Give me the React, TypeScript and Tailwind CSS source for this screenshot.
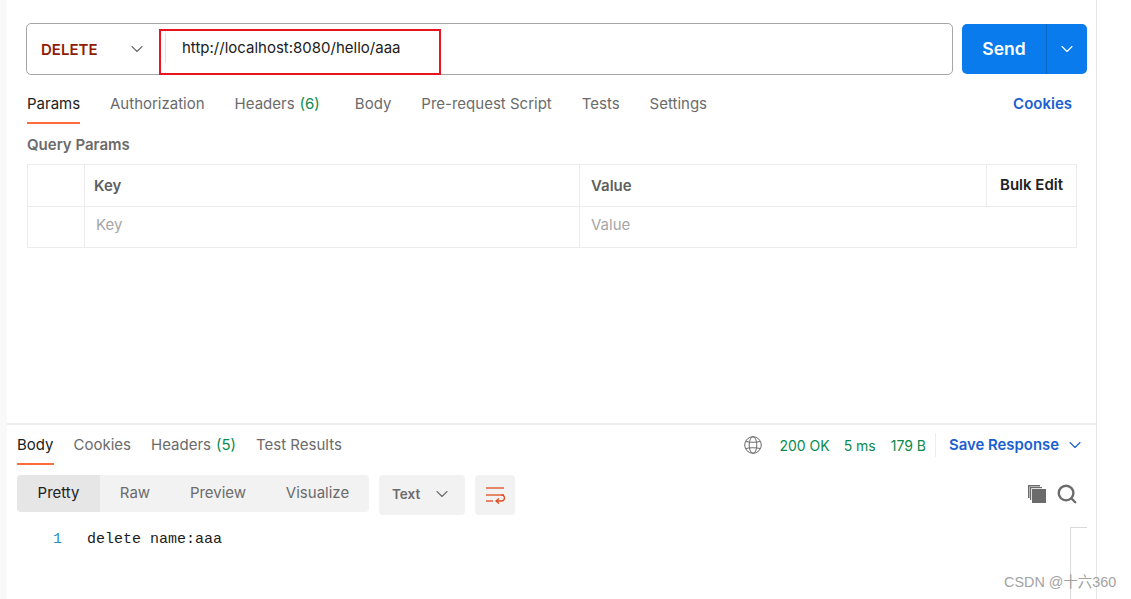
import { ChevronDown, Search } from "lucide-react"

const inter = "font-['Inter',sans-serif]"

function Tab({ label, count, active, className }: { label: string; count?: string; active?: boolean; className: string }) {
    return (
        <div className={`relative h-full flex items-center whitespace-nowrap ${active ? "text-[#212121]" : "text-[#6b6b6b]"} ${className}`}>
            <span>{label}</span>
            {count && <span className="ml-[5px] text-[#0b8a4f]">{count}</span>}
            {active && <div className="absolute left-0 right-0 bottom-0 h-[2px] bg-[#ff6c37]" />}
        </div>
    )
}

function WrapIcon() {
    return (
        <svg width="20" height="18" viewBox="0 0 20 18" fill="none" stroke="#e0491d" strokeWidth="1.3">
            <path d="M1 2h18" />
            <path d="M1 9h18" />
            <path d="M1 15h7" />
            <path d="M11 15h5.500a3 3 0 0 0 0-6" />
            <path d="M14 12.500l-3 2.500 3 2.500" />
        </svg>
    )
}

function CopyIcon() {
    return (
        <svg width="18" height="18" viewBox="0 0 18 18" fill="#6b6b6b">
            <path d="M4 4h14v14H4z" />
            <path d="M0 0h12v1.500H1.500V13H0z" />
            <path d="M2 2h1.200v13H2z" />
            <path d="M2 2h12v1.200H2z" />
        </svg>
    )
}

function GlobeIcon() {
    return (
        <svg width="18" height="18" viewBox="0 0 18 18" fill="none" stroke="#6b6b6b" strokeWidth="1" className="ml-auto">
            <circle cx="9" cy="9" r="8.300" />
            <ellipse cx="9" cy="9" rx="3.800" ry="8.300" />
            <path d="M1.800 5.500c4 1 10.400 1 14.400 0" />
            <path d="M1.800 12.500c4-1 10.400-1 14.400 0" />
        </svg>
    )
}

export default function App() {
    return (
        <div className={`w-[1131px] h-[599px] overflow-hidden bg-white flex text-[15px] ${inter}`}>
            <div className="w-[7px] shrink-0 bg-[#f9f9f9]" />

            <div className="relative w-[1090px] shrink-0 border-r border-[#e6e6e6] flex flex-col">
                {/* url bar */}
                <div className="flex h-[52px] mt-[23px] ml-[19px] mr-[9px]">
                    <div className="relative w-[927px] rounded-[5px] border border-[#a6a6a6] flex">
                        <div className="w-[138px] flex items-center justify-between pl-[14px] pr-[18px]">
                            <span className="font-semibold text-[#8f1a06] pt-[2px]">DELETE</span>
                            <ChevronDown size={20} strokeWidth={1.3} className="text-[#6b6b6b]" />
                        </div>
                        <div className="w-px h-[30px] mt-[9px] bg-[#e0e0e0]" />
                        <div className="pl-[16px] pt-[14px] text-[#212121] leading-5">http://localhost:8080/hello/aaa</div>
                        <div className="absolute left-[132px] top-[5px] w-[282px] h-[46px] border-2 border-[#e8141f]" />
                    </div>
                    <div className="ml-[9px] mt-px h-[50px] w-[125px] rounded-[5px] bg-[#097bed] text-white flex">
                        <div className="w-[85px] border-r border-[#0868c9] flex items-center justify-center font-semibold text-[17.500px]">Send</div>
                        <div className="flex-1 flex items-center justify-center">
                            <ChevronDown size={20} strokeWidth={1.3} />
                        </div>
                    </div>
                </div>

                {/* request tabs */}
                <div className="flex h-[49px] ml-[20px] mr-[24px]">
                    <Tab label="Params" active className="w-[53px] mr-[30px] pt-[9px]" />
                    <Tab label="Authorization" className="mr-[30px] pt-[9px]" />
                    <Tab label="Headers" count="(6)" className="mr-[35px] pt-[9px]" />
                    <Tab label="Body" className="mr-[30px] pt-[9px]" />
                    <Tab label="Pre-request Script" className="mr-[30px] pt-[9px]" />
                    <Tab label="Tests" className="mr-[30px] pt-[9px]" />
                    <Tab label="Settings" className="pt-[9px]" />
                    <div className="ml-auto h-full flex items-center pt-[9px] font-semibold text-[#1a5fd0]">Cookies</div>
                </div>

                <div className="ml-[20px] mt-[12px] h-[18px] leading-[18px] font-semibold text-[#6b6b6b]">Query Params</div>

                {/* params table */}
                <div className="ml-[20px] mt-[10px] w-[1050px] border border-[#ececec] border-b-0">
                    <div className="flex h-[42px] border-b border-[#ececec]">
                        <div className="w-[57px] border-r border-[#ececec]" />
                        <div className="w-[495px] border-r border-[#ececec] flex items-center pl-[9px] pt-[2px] font-semibold text-[#5f5f5f]">Key</div>
                        <div className="w-[407px] border-r border-[#ececec] flex items-center pl-[11px] pt-[2px] font-semibold text-[#5f5f5f]">Value</div>
                        <div className="flex-1 flex items-center justify-center font-semibold text-[#212121]">Bulk Edit</div>
                    </div>
                    <div className="flex h-[41px] border-b border-[#ececec]">
                        <div className="w-[57px] border-r border-[#ececec]" />
                        <div className="w-[495px] border-r border-[#ececec] flex items-center pl-[11px] pb-[4px] text-[#a6a6a6]">Key</div>
                        <div className="flex-1 flex items-center pl-[11px] pb-[4px] text-[#a6a6a6]">Value</div>
                    </div>
                </div>

                {/* response */}
                <div className="mt-[175px] h-[2px] bg-[#ededed]" />
                <div className="flex h-[40px] ml-[10px] mr-[11px] items-center">
                    <Tab label="Body" active className="mr-[20px]" />
                    <Tab label="Cookies" className="mr-[20px]" />
                    <Tab label="Headers" count="(5)" className="mr-[20px]" />
                    <Tab label="Test Results" className="" />
                    <GlobeIcon />
                    <span className="ml-[17px] text-[14px] text-[#0b8a4f]">200 OK</span>
                    <span className="ml-[14px] text-[14px] text-[#0b8a4f]">5 ms</span>
                    <span className="ml-[15px] text-[14px] text-[#0b8a4f]">179 B</span>
                    <div className="ml-[9px] w-px h-[24px] bg-[#ededed]" />
                    <span className="ml-[13px] font-semibold text-[#1a5fd0] text-[14.900px]">Save Response</span>
                    <ChevronDown size={20} strokeWidth={1.3} className="ml-[6px] text-[#1a5fd0]" />
                </div>

                <div className="flex items-start ml-[10px] mr-[18px] mt-[10px]">
                    <div className="flex w-[352px] h-[37px] rounded-[4px] bg-[#f2f2f2] overflow-hidden text-[#6b6b6b]">
                        <div className="w-[83px] bg-[#e6e6e6] text-[#212121] flex items-center justify-center">Pretty</div>
                        <div className="w-[70px] flex items-center justify-center">Raw</div>
                        <div className="w-[96px] flex items-center justify-center">Preview</div>
                        <div className="flex-1 flex items-center justify-center">Visualize</div>
                    </div>
                    <div className="ml-[10px] w-[86px] h-[40px] pb-[2px] rounded-[4px] bg-[#f2f2f2] flex items-center pl-[13px] gap-[12px] font-semibold text-[13.500px] text-[#6b6b6b]">
                        Text
                        <ChevronDown size={20} strokeWidth={1.3} />
                    </div>
                    <div className="ml-[10px] w-[40px] h-[40px] rounded-[4px] bg-[#f2f2f2] flex items-center justify-center">
                        <WrapIcon />
                    </div>
                    <div className="ml-auto flex items-center gap-[10px] h-[37px]">
                        <CopyIcon />
                        <Search size={22} strokeWidth={2.6} className="text-[#6b6b6b]" />
                    </div>
                </div>

                <div className="flex ml-[46px] mt-[15px] leading-5 text-[15px] font-['Liberation_Mono',monospace]">
                    <span className="text-[#2a8fc4]">1</span>
                    <span className="ml-[25px] text-[#1c1c1c]">delete name:aaa</span>
                </div>

                {/* editor scrollbar corner */}
                <div className="absolute left-[1063px] top-[527px] w-[17px] h-[72px] border-l border-t border-[#d9d9d9]" />
            </div>

            {/* watermark */}
            <div className="absolute left-[1004px] top-[573px] text-[14.400px] leading-[18px] whitespace-nowrap text-[#8c8c8c] opacity-80 font-['Liberation_Sans','Noto_Sans_CJK_SC',sans-serif]">CSDN @十六360</div>
        </div>
    )
}
